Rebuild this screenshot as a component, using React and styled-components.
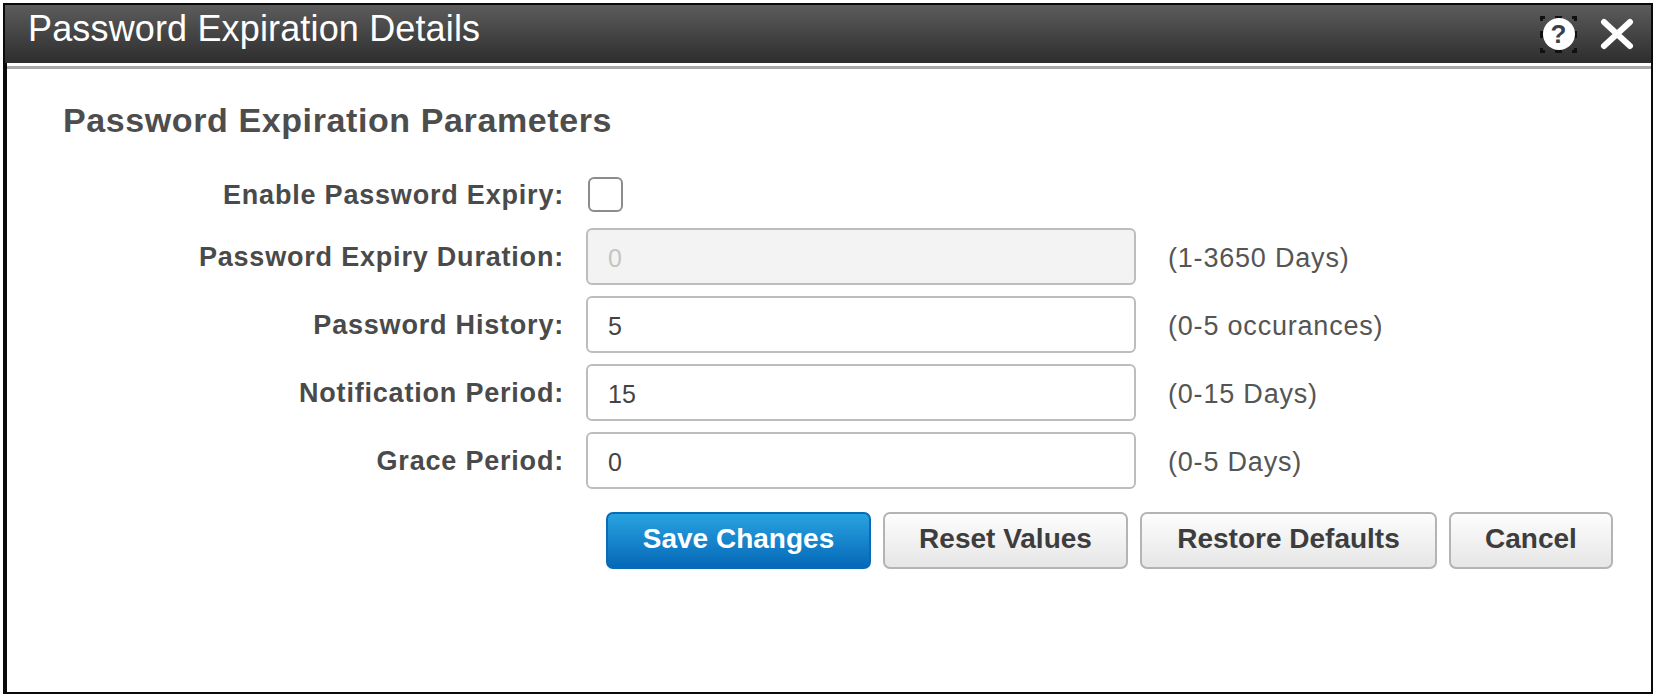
import React from "react";
import styled, { createGlobalStyle } from "styled-components";

const GlobalStyle = createGlobalStyle`
  html, body {
    margin: 0;
    padding: 0;
    background: #fff;
  }
  * {
    box-sizing: border-box;
  }
`;

const fields = [
  { label: "Password Expiry Duration:", value: "0", hint: "(1-3650 Days)", disabled: true },
  { label: "Password History:", value: "5", hint: "(0-5 occurances)" },
  { label: "Notification Period:", value: "15", hint: "(0-15 Days)" },
  { label: "Grace Period:", value: "0", hint: "(0-5 Days)" },
];

export default function App() {
  return (
    <Page>
      <GlobalStyle />
      <Dialog>
        <TitleBar>
          <Title>Password Expiration Details</Title>
          <TitleActions>
            <HelpButton aria-label="Help">
              <FocusRing width="37" height="37" viewBox="0 0 37 37">
                <rect
                  x="1.5"
                  y="1.5"
                  width="34"
                  height="34"
                  fill="none"
                  stroke="#111"
                  strokeWidth="3"
                  strokeDasharray="7 10"
                  strokeDashoffset="3.5"
                />
              </FocusRing>
              <HelpDot>?</HelpDot>
            </HelpButton>
            <CloseButton aria-label="Close">
              <svg width="34" height="32" viewBox="0 0 34 32">
                <path d="M4 4 L30 28 M30 4 L4 28" stroke="#fff" strokeWidth="6" strokeLinecap="round" fill="none" />
              </svg>
            </CloseButton>
          </TitleActions>
        </TitleBar>
        <Body>
          <Heading>Password Expiration Parameters</Heading>
          <CheckRow>
            <Label>Enable Password Expiry:</Label>
            <Checkbox type="checkbox" />
          </CheckRow>
          {fields.map((field) => (
            <FieldRow key={field.label}>
              <Label>{field.label}</Label>
              <Input defaultValue={field.value} disabled={field.disabled} />
              <Hint>{field.hint}</Hint>
            </FieldRow>
          ))}
          <ButtonRow>
            <PrimaryButton>Save Changes</PrimaryButton>
            <Button $width={245}>Reset Values</Button>
            <Button $width={297}>Restore Defaults</Button>
            <Button $width={164}>Cancel</Button>
          </ButtonRow>
        </Body>
      </Dialog>
    </Page>
  );
}

const Page = styled.div`
  width: 1656px;
  height: 697px;
  padding: 3px;
  background: #fff;
`;

const Dialog = styled.div`
  height: 691px;
  display: flex;
  flex-direction: column;
  border: 2px solid #0a0a0a;
  background: #fff;
  font-family: "Liberation Sans", Arial, sans-serif;
  overflow: hidden;
`;

const TitleBar = styled.header`
  height: 58px;
  flex-shrink: 0;
  display: flex;
  align-items: center;
  justify-content: space-between;
  padding: 0 17px 0 23px;
  background: linear-gradient(#5c5c5c, #2d2d2d);
  box-shadow: 0 3px 0 #fff, 0 6px 0 #a8a8a8;
`;

const Title = styled.h1`
  margin: 0 0 11px;
  font-size: 36px;
  font-weight: 400;
  letter-spacing: 0.15px;
  color: #fff;
`;

const TitleActions = styled.div`
  display: flex;
  align-items: center;
  gap: 23px;
`;

const HelpButton = styled.button`
  position: relative;
  width: 37px;
  height: 37px;
  padding: 0;
  display: flex;
  align-items: center;
  justify-content: center;
  border: none;
  background: none;
`;

const FocusRing = styled.svg`
  position: absolute;
  inset: 0;
`;

const HelpDot = styled.span`
  position: relative;
  width: 32px;
  height: 32px;
  flex-shrink: 0;
  display: flex;
  align-items: center;
  justify-content: center;
  border-radius: 50%;
  background: #fff;
  color: #3a4148;
  font: 700 26px "Liberation Sans", Arial, sans-serif;
`;

const CloseButton = styled.button`
  width: 34px;
  height: 32px;
  padding: 0;
  display: flex;
  border: none;
  background: none;
`;

const Body = styled.main`
  flex: 1;
  padding: 38px 33px 0 56px;
  border-left: 2px solid #0a0a0a;
`;

const Heading = styled.h2`
  margin: 0 0 37px;
  font-size: 34px;
  line-height: 38px;
  font-weight: 700;
  letter-spacing: 0.6px;
  color: #4d4d4d;
`;

const CheckRow = styled.div`
  display: grid;
  grid-template-columns: 501px auto;
  column-gap: 24px;
  align-items: center;
  height: 36px;
  margin-bottom: 16px;
`;

const FieldRow = styled.div`
  display: grid;
  grid-template-columns: 501px 550px auto;
  column-gap: 22px;
  align-items: center;
  height: 57px;
  margin-bottom: 11px;
`;

const Label = styled.label`
  padding-top: 2px;
  text-align: right;
  font-size: 27px;
  font-weight: 700;
  letter-spacing: 0.8px;
  color: #4a4a4a;
`;

const Checkbox = styled.input`
  appearance: none;
  width: 35px;
  height: 35px;
  margin: 0;
  border: 2px solid #8c8c8c;
  border-radius: 6px;
  background: #fff;
`;

const Input = styled.input`
  width: 100%;
  height: 57px;
  padding: 3px 20px 0;
  border: 2px solid #bdbdbd;
  border-radius: 6px;
  background: #fff;
  font: 400 25px "Liberation Sans", Arial, sans-serif;
  color: #444;

  &:disabled {
    background: #f3f3f3;
    color: #c4c4c4;
  }
`;

const Hint = styled.span`
  margin-left: 10px;
  padding-top: 4px;
  font-size: 27px;
  letter-spacing: 0.8px;
  color: #555;
`;

const ButtonRow = styled.div`
  display: flex;
  gap: 12px;
  margin: 23px 0 0 543px;
`;

const Button = styled.button`
  width: ${({ $width }) => $width}px;
  height: 57px;
  padding: 0 0 3px;
  border: 2px solid #b4b4b4;
  border-radius: 7px;
  background: linear-gradient(#fdfdfd, #e6e6e6);
  font: 700 28px "Liberation Sans", Arial, sans-serif;
  color: #3d3d3d;
`;

const PrimaryButton = styled(Button).attrs({ $width: 265 })`
  border-color: #0a6bb5;
  background: linear-gradient(#29a3e0, #0568b8);
  color: #fff;
`;
